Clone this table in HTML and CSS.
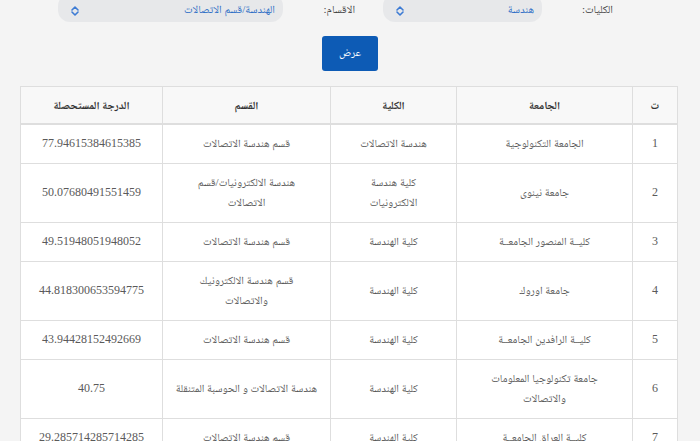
FILE: index.html
```html
<!DOCTYPE html>
<html lang="ar" dir="rtl">
<head>
<meta charset="utf-8">
<title>النتائج</title>
<link rel="stylesheet" href="styles.css">
</head>
<body>
<div class="page">
  <form class="filters">
    <label class="lbl lbl-college">الكليات:</label>
    <div class="select sel-college">
      <span class="sel-text">هندسة</span>
      <svg class="sel-arrow" width="8" height="10" viewBox="0 0 8 10"><path d="M1 4 L4 1 L7 4 M1 6 L4 9 L7 6" fill="none" stroke="#3d7bd4" stroke-width="1.6" stroke-linecap="round" stroke-linejoin="round"/></svg>
    </div>
    <label class="lbl lbl-dept">الاقسام:</label>
    <div class="select sel-dept">
      <span class="sel-text">الهندسة/قسم الاتصالات</span>
      <svg class="sel-arrow" width="8" height="10" viewBox="0 0 8 10"><path d="M1 4 L4 1 L7 4 M1 6 L4 9 L7 6" fill="none" stroke="#3d7bd4" stroke-width="1.6" stroke-linecap="round" stroke-linejoin="round"/></svg>
    </div>
  </form>
  <div class="actions"><button class="btn" type="button">عرض</button></div>
  <table class="results">
    <colgroup>
      <col class="c-num"><col class="c-uni"><col class="c-col"><col class="c-dept"><col class="c-grade">
    </colgroup>
    <thead>
      <tr><th>ت</th><th>الجامعة</th><th>الكلية</th><th>القسم</th><th>الدرجة المستحصلة</th></tr>
    </thead>
    <tbody>
      <tr><td>1</td><td>الجامعة التكنولوجية</td><td>هندسة الاتصالات</td><td>قسم هندسة الاتصالات</td><td>77.94615384615385</td></tr>
      <tr><td>2</td><td>جامعة نينوى</td><td>كلية هندسة<br>الالكترونيات</td><td>هندسة الالكترونيات/قسم<br>الاتصالات</td><td>50.07680491551459</td></tr>
      <tr><td>3</td><td>كليــة المنصور الجامعــة</td><td>كلية الهندسة</td><td>قسم هندسة الاتصالات</td><td>49.51948051948052</td></tr>
      <tr><td>4</td><td>جامعة اوروك</td><td>كلية الهندسة</td><td>قسم هندسة الالكترونيك<br>والاتصالات</td><td>44.818300653594775</td></tr>
      <tr><td>5</td><td>كليــة الرافدين الجامعــة</td><td>كلية الهندسة</td><td>قسم هندسة الاتصالات</td><td>43.94428152492669</td></tr>
      <tr><td>6</td><td>جامعة تكنولوجيا المعلومات<br>والاتصالات</td><td>كلية الهندسة</td><td>هندسة الاتصالات و الحوسبة المتنقلة</td><td>40.75</td></tr>
      <tr><td>7</td><td>كليــة العراق الجامعــة</td><td>كلية الهندسة</td><td>قسم هندسة الاتصالات</td><td>29.285714285714285</td></tr>
    </tbody>
  </table>
</div>
</body>
</html>
```

FILE: styles.css
```css
html, body {
  margin: 0;
  padding: 0;
  background: #f4f4f4;
}
body {
  font-family: "Liberation Serif", "Noto Naskh Arabic", "DejaVu Sans", serif;
  font-size: 11px;
  color: #555;
  overflow: hidden;
}
.page {
  margin-top: -6px;
}
.filters {
  display: flex;
  align-items: center;
  height: 28px;
  padding-right: 87px;
}
.lbl {
  font-size: 11px;
  color: #444;
  margin-top: 5px;
}
.lbl-college { width: 30px; margin-left: 41px; }
.lbl-dept { width: 32px; margin-right: 28px; margin-left: 40px; }
.select {
  height: 28px;
  border-radius: 12px;
  background: #e7e8ea;
  display: flex;
  align-items: center;
  justify-content: space-between;
  padding: 0 8px 0 13px;
  box-sizing: border-box;
  color: #2f6fc6;
  font-size: 11px;
}
.sel-college { width: 159px; }
.sel-dept { width: 225px; }
.sel-text { margin-top: 5px; }
.sel-arrow { margin-top: 6px; }
.actions {
  display: flex;
  justify-content: center;
  margin-top: 14px;
}
.btn {
  width: 56px;
  height: 35px;
  border: none;
  border-radius: 3px;
  background: #0d5bb5;
  color: #fff;
  font-family: inherit;
  font-size: 11px;
  padding: 0;
}
.results {
  margin: 15px 22px 0 21px;
  width: 657px;
  border-collapse: collapse;
  background: #fff;
  table-layout: fixed;
}
.c-num { width: 45px; }
.c-uni { width: 176px; }
.c-col { width: 126px; }
.c-dept { width: 168px; }
.c-grade { width: 142px; }
.results th, .results td {
  border: 1px solid #dedede;
  text-align: center;
  line-height: 20px;
  padding: 8px 4px 10px;
  white-space: nowrap;
}
.results th {
  background: #f8f8f8;
  color: #333;
  font-weight: bold;
  font-size: 11px;
  padding: 8px 4px;
  border-bottom-width: 2px;
}
.results td {
  color: #5a5a5a;
}
.results td:first-child,
.results td:last-child {
  font-size: 12px;
}
```
